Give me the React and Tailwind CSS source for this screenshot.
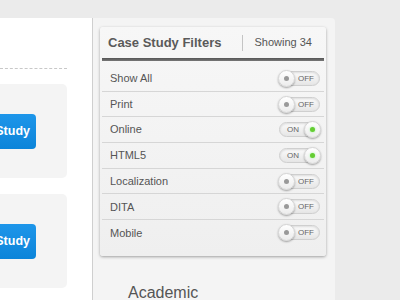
const filters = [
  { label: 'Show All', on: false },
  { label: 'Print', on: false },
  { label: 'Online', on: true },
  { label: 'HTML5', on: true },
  { label: 'Localization', on: false },
  { label: 'DITA', on: false },
  { label: 'Mobile', on: false },
];

const Toggle = ({ on }) => {
  return (
    <div className="relative w-[41px] h-[15px] rounded-full border border-[#cfcfcf] bg-gradient-to-b from-[#fbfbfb] to-[#e6e6e6] shadow-[inset_0_1px_2px_rgba(0,0,0,0.12)]">
      {on ? (
        <>
          <span className="absolute left-[7px] top-[1px] text-[8px] leading-[12px] text-[#666]">ON</span>
          <span className="absolute right-[-2px] top-[-2px] w-[17px] h-[17px] rounded-full bg-gradient-to-b from-white to-[#ececec] border border-[#d4d4d4] shadow-[0_1px_2px_rgba(0,0,0,0.35)] flex items-center justify-center">
            <span className="w-[5px] h-[5px] rounded-full bg-[#66cc33] shadow-[0_0_2px_#8f8]" />
          </span>
        </>
      ) : (
        <>
          <span className="absolute left-[-2px] top-[-2px] w-[17px] h-[17px] rounded-full bg-gradient-to-b from-white to-[#ececec] border border-[#d4d4d4] shadow-[0_1px_2px_rgba(0,0,0,0.35)] flex items-center justify-center">
            <span className="w-[5px] h-[5px] rounded-full bg-[#999]" />
          </span>
          <span className="absolute left-[18px] top-[1px] text-[8px] leading-[12px] text-[#666]">OFF</span>
        </>
      )}
    </div>
  );
};

const StudyCard = () => {
  return (
    <div className="h-[94px] w-[67px] bg-[#f4f4f4] rounded-r-[5px] flex items-center">
      <div className="h-[35px] w-[36px] rounded-r-[4px] bg-gradient-to-b from-[#1d96ea] to-[#0b84d9] flex items-center justify-end pr-[6px] overflow-hidden">
        <span className="text-white font-bold text-[12.5px] whitespace-nowrap">Study</span>
      </div>
    </div>
  );
};

export default function App() {
  return (
    <div className="w-[400px] h-[300px] overflow-hidden bg-[#ebebeb] flex flex-col font-['Liberation_Sans',Arial,sans-serif]">
      <div className="h-[18px] shrink-0" />
      <div className="flex flex-1 min-h-0">
        <div className="w-[93px] shrink-0 bg-white border-r border-[#cfcfcf] pt-[50px]">
          <div className="w-[67px] border-t border-dashed border-[#c8c8c8]" />
          <div className="mt-[15px] flex flex-col gap-[16px]">
            <StudyCard />
            <StudyCard />
          </div>
        </div>
        <div className="w-[242px] shrink-0 bg-[#f4f4f4] rounded-tr-[4px] pl-[7px] pt-[9px]">
          <div className="w-[226px] h-[229px] rounded-[3px] bg-gradient-to-b from-[#f7f7f7] to-[#efefef] shadow-[0_1px_3px_rgba(0,0,0,0.35)] px-[2px]">
            <div className="h-[31px] flex items-center pl-[6px] pr-[12px]">
              <span className="text-[13px] font-bold text-[#5a5a5a]">Case Study Filters</span>
              <span className="ml-auto w-px h-[16px] bg-[#c4c4c4]" />
              <span className="ml-[12px] text-[11px] text-[#555]">Showing 34</span>
            </div>
            <div className="h-[3px] bg-gradient-to-b from-[#555] to-[#777]" />
            <div className="mt-[5px]">
              {filters.map((f, i) => (
                <div
                  key={f.label}
                  className={`h-[25.7px] flex items-center pl-[8px] pr-[4px] ${i < filters.length - 1 ? 'border-b border-[#d6d6d6]' : ''}`}
                >
                  <span className="text-[11px] text-[#555]">{f.label}</span>
                  <div className="ml-auto">
                    <Toggle on={f.on} />
                  </div>
                </div>
              ))}
            </div>
          </div>
          <div className="mt-[25px] pl-[28px] text-[16px] text-[#555]">Academic</div>
        </div>
      </div>
    </div>
  );
}
